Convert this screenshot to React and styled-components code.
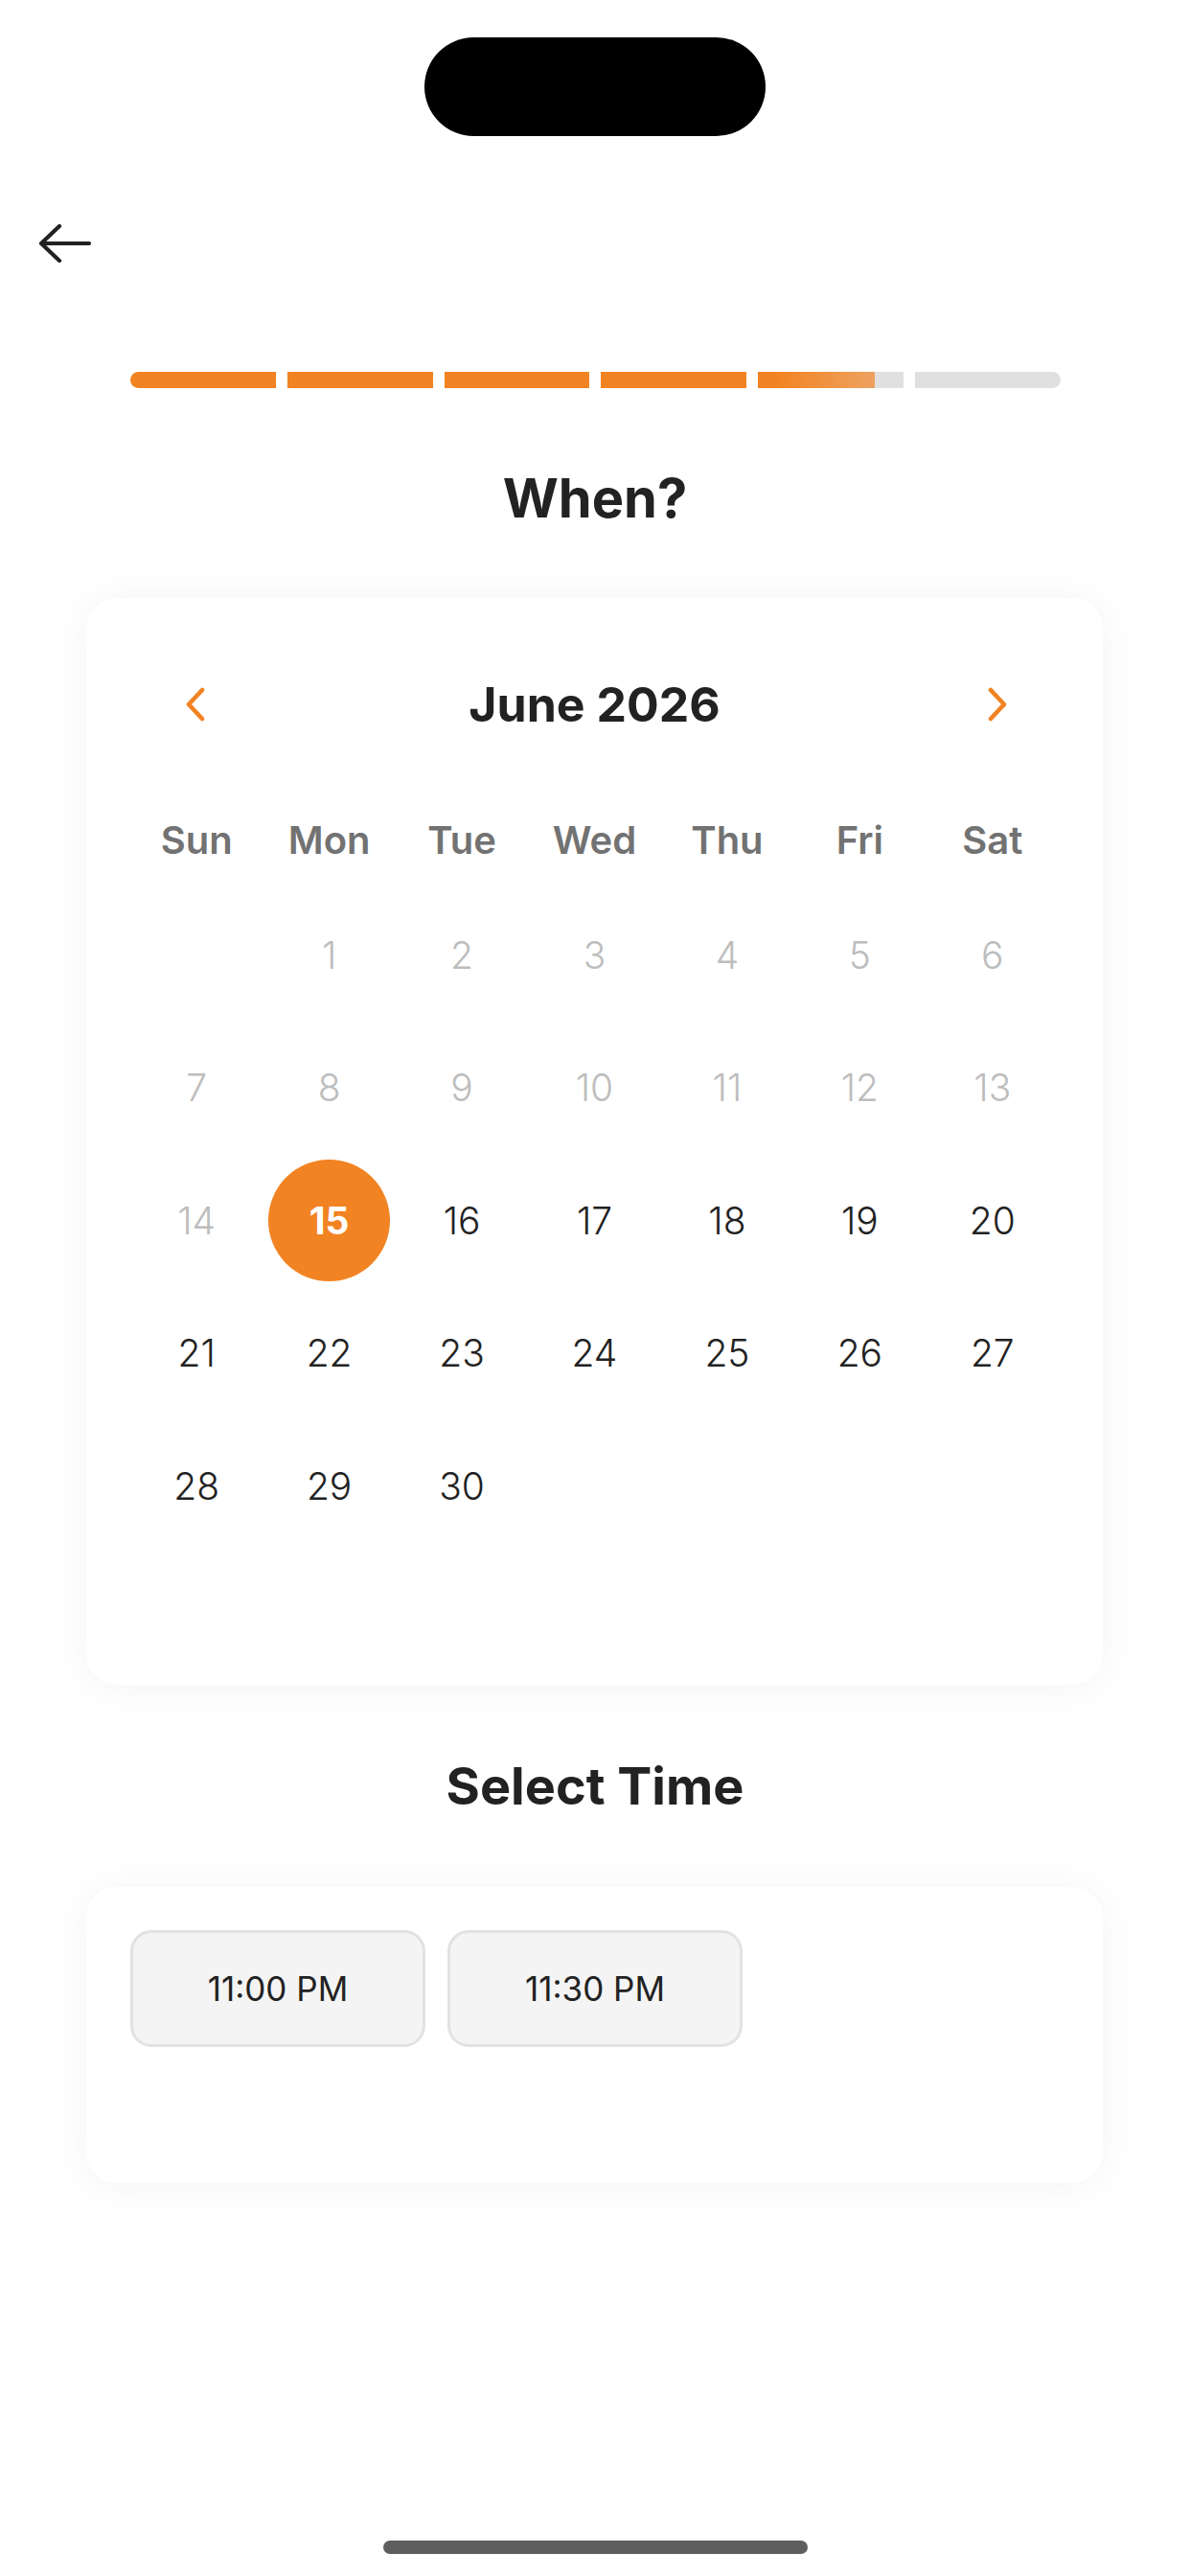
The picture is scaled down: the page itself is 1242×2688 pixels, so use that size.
import React from 'react';
import styled, { createGlobalStyle } from 'styled-components';

const ORANGE = '#F28322';

const GlobalStyle = createGlobalStyle`
  html, body { margin: 0; padding: 0; background: #ffffff; }
  body { font-family: Inter, "Noto Sans", sans-serif; color: #222222; }
  *, *::before, *::after { box-sizing: border-box; }
`;

const Screen = styled.div`
  width: 1242px;
  min-height: 2688px;
  display: flex;
  flex-direction: column;
  background: #ffffff;
`;

const StatusBar = styled.div`
  height: 180px;
  display: flex;
  justify-content: center;
  padding-top: 39px;
`;

const Island = styled.div`
  width: 356px;
  height: 103px;
  border-radius: 52px;
  background: #000000;
`;

const NavRow = styled.div`
  height: 148px;
  display: flex;
  align-items: center;
  padding-left: 40px;
`;

const BackButton = styled.button`
  border: 0;
  background: none;
  padding: 0;
  width: 56px;
  height: 42px;
  display: flex;
  align-items: center;
  cursor: pointer;
`;

const Progress = styled.div`
  margin: 60px 135px 0 136px;
  height: 17px;
  display: flex;
  gap: 12px;
  border-radius: 9px;
  overflow: hidden;
`;

const Segment = styled.div`
  flex: 1;
  background: ${p => (p.$done ? ORANGE : '#E0E0E0')};
  overflow: hidden;
`;

const SegmentFill = styled.div`
  height: 100%;
  background: linear-gradient(90deg, ${ORANGE} 15%, #EEA260 100%);
`;

const Title = styled.h1`
  margin: 87px 0 0;
  font-size: 56px;
  line-height: 1;
  font-weight: 700;
  text-align: center;
  color: #222222;
`;

const Card = styled.section`
  margin: ${p => p.$top}px 91px 0 90px;
  background: #ffffff;
  border-radius: 32px;
  box-shadow: 0 2px 40px rgba(0, 0, 0, 0.05);
`;

const CalendarCard = styled(Card)`
  padding: 46px 46px 0;
`;

const MonthHeader = styled.div`
  height: 130px;
  display: flex;
  align-items: center;
  justify-content: space-between;
`;

const NavArrow = styled.button`
  width: 138px;
  height: 60px;
  border: 0;
  background: none;
  padding: ${p => (p.$side === 'right' ? '0 0 0 10px' : '0 2px 0 0')};
  display: flex;
  align-items: center;
  justify-content: center;
  cursor: pointer;
`;

const MonthTitle = styled.h2`
  margin: 0;
  font-size: 50px;
  line-height: 1;
  font-weight: 700;
  color: #222222;
`;

const WeekRow = styled.div`
  margin-top: 27px;
  height: 100px;
  display: grid;
  grid-template-columns: repeat(7, 1fr);
  align-items: center;
`;

const WeekdayLabel = styled.div`
  text-align: center;
  font-size: 40px;
  line-height: 1;
  font-weight: 600;
  color: #727272;
`;

const DateGrid = styled.div`
  display: grid;
  grid-template-columns: repeat(7, 1fr);
  grid-auto-rows: 138.5px;
`;

const DayCell = styled.div`
  display: flex;
  align-items: center;
  justify-content: center;
`;

const DayNumber = styled.span`
  width: 127px;
  height: 127px;
  border-radius: 50%;
  display: flex;
  align-items: center;
  justify-content: center;
  font-size: 39px;
  line-height: 1;
  font-weight: ${p => (p.$selected ? 700 : 300)};
  color: ${p => (p.$selected ? '#ffffff' : p.$disabled ? '#BDBDBD' : '#222222')};
  background: ${p => (p.$selected ? ORANGE : 'transparent')};
`;

const SectionTitle = styled.h2`
  margin: 79px 0 0;
  font-size: 54px;
  line-height: 1;
  font-weight: 700;
  text-align: center;
  color: #222222;
`;

const TimeCard = styled(Card)`
  padding: 45px 46px;
  min-height: 309px;
  display: flex;
  flex-wrap: wrap;
  align-content: flex-start;
  gap: 23px;
`;

const TimeSlot = styled.button`
  width: 308px;
  height: 122px;
  border: 3px solid #E2E2E2;
  border-radius: 22px;
  background: #F4F4F4;
  font-family: Inter, "Noto Sans", sans-serif;
  font-size: 35px;
  font-weight: 400;
  color: #222222;
  cursor: pointer;
`;

const Spacer = styled.div`
  flex: 1;
`;

const HomeIndicator = styled.div`
  width: 443px;
  height: 14px;
  border-radius: 7px;
  background: #5E5E5E;
  margin: 0 auto 23px;
`;

const BackArrow = () => (
  <svg width="56" height="42" viewBox="0 0 56 42" fill="none">
    <path d="M53 21H4M22 3L3 21L22 39" stroke="#222" strokeWidth="4.2" strokeLinecap="round" strokeLinejoin="round" />
  </svg>
);

const Chevron = ({ dir }) => (
  <svg width="24" height="36" viewBox="0 0 24 36" fill="none">
    <path
      d={dir === 'left' ? 'M19 3L5 18L19 33' : 'M5 3L19 18L5 33'}
      stroke={ORANGE}
      strokeWidth="4.6"
      strokeLinecap="round"
      strokeLinejoin="round"
    />
  </svg>
);

const WEEKDAYS = ['Sun', 'Mon', 'Tue', 'Wed', 'Thu', 'Fri', 'Sat'];
const SEGMENTS = [1, 1, 1, 1, 0.8, 0];

function buildDays() {
  const cells = [];
  const offset = 1; // June 1, 2026 is a Monday
  for (let i = 0; i < 42; i++) {
    const d = i - offset + 1;
    cells.push(d >= 1 && d <= 30 ? d : null);
  }
  return cells;
}

export default function App() {
  const days = buildDays();
  const selected = 15;
  return (
    <>
      <GlobalStyle />
      <Screen>
        <StatusBar>
          <Island />
        </StatusBar>
        <NavRow>
          <BackButton aria-label="Back">
            <BackArrow />
          </BackButton>
        </NavRow>
        <Progress>
          {SEGMENTS.map((v, i) => (
            <Segment key={i} $done={v === 1}>
              {v > 0 && v < 1 && <SegmentFill style={{ width: `${v * 100}%` }} />}
            </Segment>
          ))}
        </Progress>
        <Title>When?</Title>
        <CalendarCard $top={76}>
          <MonthHeader>
            <NavArrow $side="left" aria-label="Previous month">
              <Chevron dir="left" />
            </NavArrow>
            <MonthTitle>June 2026</MonthTitle>
            <NavArrow $side="right" aria-label="Next month">
              <Chevron dir="right" />
            </NavArrow>
          </MonthHeader>
          <WeekRow>
            {WEEKDAYS.map(w => (
              <WeekdayLabel key={w}>{w}</WeekdayLabel>
            ))}
          </WeekRow>
          <DateGrid>
            {days.map((d, i) => (
              <DayCell key={i}>
                {d && (
                  <DayNumber $disabled={d < selected} $selected={d === selected}>
                    {d}
                  </DayNumber>
                )}
              </DayCell>
            ))}
          </DateGrid>
        </CalendarCard>
        <SectionTitle>Select Time</SectionTitle>
        <TimeCard $top={78}>
          <TimeSlot>11:00 PM</TimeSlot>
          <TimeSlot>11:30 PM</TimeSlot>
        </TimeCard>
        <Spacer />
        <HomeIndicator />
      </Screen>
    </>
  );
}
